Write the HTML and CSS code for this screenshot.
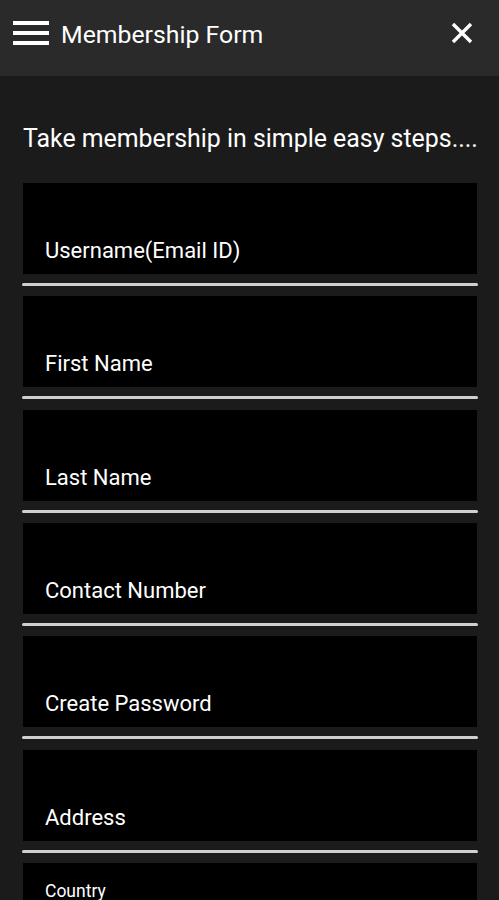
FILE: index.html
```html
<!DOCTYPE html>
<html lang="en">
<head>
    <meta charset="UTF-8">
    <meta name="viewport" content="width=device-width, initial-scale=1.0">
    <title>Membership Form</title>
    <link rel="stylesheet" href="styles.css">
</head>
<body>
    <header class="topbar">
        <svg class="menu-icon" width="36" height="24" viewBox="0 0 36 24">
            <rect x="0" y="0" width="36" height="4" fill="#fff"/>
            <rect x="0" y="10" width="36" height="4" fill="#fff"/>
            <rect x="0" y="20" width="36" height="4" fill="#fff"/>
        </svg>
        <h1 class="title">Membership Form</h1>
        <svg class="close-icon" width="22" height="22" viewBox="0 0 22 22">
            <path d="M2 2 L20 20 M20 2 L2 20" stroke="#fff" stroke-width="3.4" fill="none"/>
        </svg>
    </header>

    <main class="content">
        <p class="intro">Take membership in simple easy steps....</p>

        <form class="form">
            <div class="field">
                <div class="field-box"><span class="label">Username(Email ID)</span></div>
                <div class="field-line"></div>
            </div>
            <div class="field">
                <div class="field-box"><span class="label">First Name</span></div>
                <div class="field-line"></div>
            </div>
            <div class="field">
                <div class="field-box"><span class="label">Last Name</span></div>
                <div class="field-line"></div>
            </div>
            <div class="field">
                <div class="field-box"><span class="label">Contact Number</span></div>
                <div class="field-line"></div>
            </div>
            <div class="field">
                <div class="field-box"><span class="label">Create Password</span></div>
                <div class="field-line"></div>
            </div>
            <div class="field">
                <div class="field-box"><span class="label">Address</span></div>
                <div class="field-line"></div>
            </div>
            <div class="field">
                <div class="field-box field-box-top"><span class="label label-small">Country</span></div>
                <div class="field-line"></div>
            </div>
        </form>
    </main>
</body>
</html>
```

FILE: styles.css
```css
body {
    margin: 0;
    background-color: #1b1b1b;
    color: #fff;
    font-family: Roboto, "Liberation Sans", sans-serif;
    overflow: hidden;
}
.topbar {
    display: flex;
    align-items: center;
    height: 76px;
    padding: 0 26px 0 13px;
    background-color: #2a2a2a;
    box-sizing: border-box;
}
.menu-icon {
    flex-shrink: 0;
    margin-top: -10px;
}
.title {
    flex: 1;
    margin: -8px 0 0 12px;
    font-size: 24.8px;
    font-weight: 400;
}
.close-icon {
    flex-shrink: 0;
    margin-top: -10px;
}
.content {
    padding: 0 22px 0 23px;
}
.intro {
    margin: 47px 0 28px;
    font-size: 24.9px;
    line-height: 32px;
    white-space: nowrap;
}
.field {
    margin-bottom: 10.33px;
}
.field-box {
    display: flex;
    align-items: flex-end;
    height: 91px;
    padding: 0 22px 10px;
    background-color: #000;
    box-sizing: border-box;
}
.field-box-top {
    align-items: flex-start;
    padding-top: 17px;
}
.label {
    font-size: 22px;
    line-height: 26px;
}
.label-small {
    font-size: 17.5px;
    line-height: 22px;
}
.field-line {
    height: 3px;
    margin: 9px -1px 0;
    background-color: #cfcfcf;
    border-radius: 2px;
}
```
